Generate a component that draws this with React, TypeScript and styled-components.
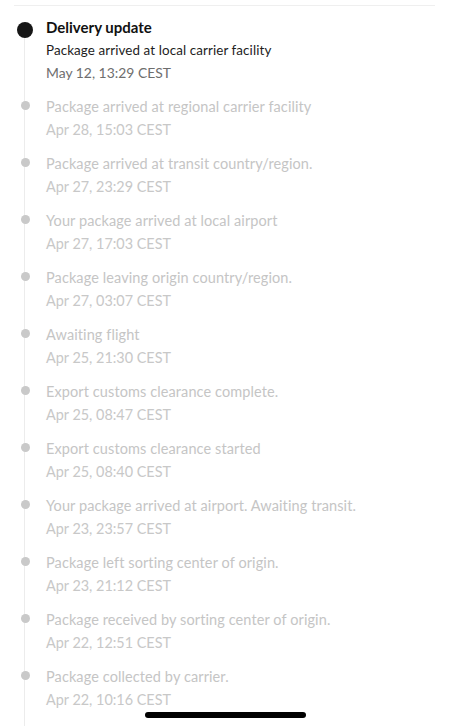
import React from 'react';
import styled, { createGlobalStyle } from 'styled-components';

interface TrackingEvent {
  text: string;
  time: string;
}

const GlobalStyle = createGlobalStyle`
  html, body {
    margin: 0;
    padding: 0;
    background: #ffffff;
    font-family: Lato, "Open Sans", "Liberation Sans", sans-serif;
    -webkit-font-smoothing: antialiased;
  }
`;

const Page = styled.div`
  width: 450px;
  height: 726px;
  overflow: hidden;
  box-sizing: border-box;
  padding: 5px 15px 0 14px;
`;

const Divider = styled.div`
  height: 1px;
  background: #efefef;
  margin-bottom: 10px;
`;

const Timeline = styled.ul`
  list-style: none;
  margin: 0;
  padding: 0;
`;

const Item = styled.li`
  display: grid;
  grid-template-columns: 32px 1fr;
  padding-bottom: 11px;
  background-image: linear-gradient(#ececec, #ececec);
  background-size: 1px 100%;
  background-position: 10px 0;
  background-repeat: no-repeat;

  &:first-child {
    background-position: 10px 14px;
  }
`;

const Rail = styled.div`
  display: flex;
  justify-content: center;
  width: 22px;
`;

const Dot = styled.span<{ $active?: boolean }>`
  display: block;
  border-radius: 50%;
  width: ${({ $active }) => ($active ? '16px' : '9px')};
  height: ${({ $active }) => ($active ? '16px' : '9px')};
  margin-top: 6px;
  background: ${({ $active }) => ($active ? '#161616' : '#c9c9c9')};
`;

const Body = styled.div`
  display: flex;
  flex-direction: column;
`;

const Title = styled.div`
  font-size: 15px;
  font-weight: 700;
  color: #111111;
  line-height: 23px;
`;

const Text = styled.div<{ $active?: boolean }>`
  font-size: ${({ $active }) => ($active ? '13.4px' : '14.5px')};
  line-height: 23px;
  color: ${({ $active }) => ($active ? '#1d1d1d' : '#c5c5c5')};
  letter-spacing: 0.1px;
`;

const Time = styled.div<{ $active?: boolean }>`
  font-size: ${({ $active }) => ($active ? '13.9px' : '14.4px')};
  line-height: ${({ $active }) => ($active ? '22px' : '23px')};
  color: ${({ $active }) => ($active ? '#6e6e6e' : '#c8c8c8')};
`;

const HomeIndicator = styled.div`
  position: fixed;
  left: 145px;
  top: 712px;
  width: 161px;
  height: 6px;
  border-radius: 3px;
  background: #000000;
`;

const events: TrackingEvent[] = [
  { text: 'Package arrived at regional carrier facility', time: 'Apr 28, 15:03 CEST' },
  { text: 'Package arrived at transit country/region.', time: 'Apr 27, 23:29 CEST' },
  { text: 'Your package arrived at local airport', time: 'Apr 27, 17:03 CEST' },
  { text: 'Package leaving origin country/region.', time: 'Apr 27, 03:07 CEST' },
  { text: 'Awaiting flight', time: 'Apr 25, 21:30 CEST' },
  { text: 'Export customs clearance complete.', time: 'Apr 25, 08:47 CEST' },
  { text: 'Export customs clearance started', time: 'Apr 25, 08:40 CEST' },
  { text: 'Your package arrived at airport. Awaiting transit.', time: 'Apr 23, 23:57 CEST' },
  { text: 'Package left sorting center of origin.', time: 'Apr 23, 21:12 CEST' },
  { text: 'Package received by sorting center of origin.', time: 'Apr 22, 12:51 CEST' },
  { text: 'Package collected by carrier.', time: 'Apr 22, 10:16 CEST' },
  { text: 'Your package has been handed over to carrier.', time: 'Apr 21, 18:02 CEST' }
];

function App (): React.ReactElement {
  return (
    <Page>
      <GlobalStyle />
      <Divider />
      <Timeline>
        <Item>
          <Rail><Dot $active /></Rail>
          <Body>
            <Title>Delivery update</Title>
            <Text $active>Package arrived at local carrier facility</Text>
            <Time $active>May 12, 13:29 CEST</Time>
          </Body>
        </Item>
        {events.map((event, index) => (
          <Item key={index}>
            <Rail><Dot /></Rail>
            <Body>
              <Text>{event.text}</Text>
              <Time>{event.time}</Time>
            </Body>
          </Item>
        ))}
      </Timeline>
      <HomeIndicator />
    </Page>
  );
}

export default App;
